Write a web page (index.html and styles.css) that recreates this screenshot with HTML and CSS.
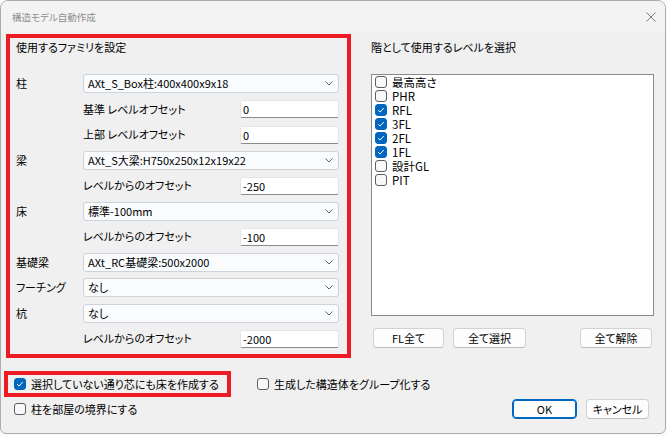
FILE: index.html
```html
<!DOCTYPE html>
<html lang="ja">
<head>
<meta charset="utf-8">
<title>構造モデル自動作成</title>
<link rel="stylesheet" href="styles.css">
</head>
<body>
<div class="window">
  <div class="titlebar">
    <span class="title">構造モデル自動作成</span>
    <svg class="close" width="10" height="10" viewBox="0 0 10 10"><path d="M0.5 0.5L9.5 9.5M9.5 0.5L0.5 9.5" stroke="#7a7a7a" stroke-width="1" fill="none"/></svg>
  </div>
  <div class="main">
    <section class="families">
      <div class="heading">使用するファミリを設定</div>
      <div class="fields">
        <span class="label">柱</span>
        <div class="select"><span>AXt_S_Box柱:400x400x9x18</span><svg width="8" height="5" viewBox="0 0 8 5"><path d="M0.5 0.5L4 4L7.5 0.5" fill="none" stroke="#606060" stroke-width="1"/></svg></div>
        <span class="sublabel">基準 レベルオフセット</span>
        <div class="input">0</div>
        <span class="sublabel">上部 レベルオフセット</span>
        <div class="input">0</div>

        <span class="label">梁</span>
        <div class="select"><span>AXt_S大梁:H750x250x12x19x22</span><svg width="8" height="5" viewBox="0 0 8 5"><path d="M0.5 0.5L4 4L7.5 0.5" fill="none" stroke="#606060" stroke-width="1"/></svg></div>
        <span class="sublabel">レベルからのオフセット</span>
        <div class="input">-250</div>

        <span class="label">床</span>
        <div class="select"><span>標準-100mm</span><svg width="8" height="5" viewBox="0 0 8 5"><path d="M0.5 0.5L4 4L7.5 0.5" fill="none" stroke="#606060" stroke-width="1"/></svg></div>
        <span class="sublabel">レベルからのオフセット</span>
        <div class="input">-100</div>

        <span class="label">基礎梁</span>
        <div class="select"><span>AXt_RC基礎梁:500x2000</span><svg width="8" height="5" viewBox="0 0 8 5"><path d="M0.5 0.5L4 4L7.5 0.5" fill="none" stroke="#606060" stroke-width="1"/></svg></div>

        <span class="label">フーチング</span>
        <div class="select"><span>なし</span><svg width="8" height="5" viewBox="0 0 8 5"><path d="M0.5 0.5L4 4L7.5 0.5" fill="none" stroke="#606060" stroke-width="1"/></svg></div>

        <span class="label">杭</span>
        <div class="select"><span>なし</span><svg width="8" height="5" viewBox="0 0 8 5"><path d="M0.5 0.5L4 4L7.5 0.5" fill="none" stroke="#606060" stroke-width="1"/></svg></div>
        <span class="sublabel">レベルからのオフセット</span>
        <div class="input">-2000</div>
      </div>
    </section>

    <section class="levels">
      <div class="heading">階として使用するレベルを選択</div>
      <div class="listbox">
        <div class="item"><span class="cb"></span><span class="itext">最高高さ</span></div>
        <div class="item"><span class="cb"></span><span class="itext">PHR</span></div>
        <div class="item"><span class="cb checked"><svg width="10" height="10" viewBox="0 0 10 10"><path d="M2.2 5.2L4.1 7L7.8 3" fill="none" stroke="#fff" stroke-width="1"/></svg></span><span class="itext">RFL</span></div>
        <div class="item"><span class="cb checked"><svg width="10" height="10" viewBox="0 0 10 10"><path d="M2.2 5.2L4.1 7L7.8 3" fill="none" stroke="#fff" stroke-width="1"/></svg></span><span class="itext">3FL</span></div>
        <div class="item"><span class="cb checked"><svg width="10" height="10" viewBox="0 0 10 10"><path d="M2.2 5.2L4.1 7L7.8 3" fill="none" stroke="#fff" stroke-width="1"/></svg></span><span class="itext">2FL</span></div>
        <div class="item"><span class="cb checked"><svg width="10" height="10" viewBox="0 0 10 10"><path d="M2.2 5.2L4.1 7L7.8 3" fill="none" stroke="#fff" stroke-width="1"/></svg></span><span class="itext">1FL</span></div>
        <div class="item"><span class="cb"></span><span class="itext">設計GL</span></div>
        <div class="item"><span class="cb"></span><span class="itext">PIT</span></div>
      </div>
      <div class="list-buttons">
        <button class="btn w71">FL全て</button>
        <button class="btn w73">全て選択</button>
        <span class="spacer"></span>
        <button class="btn w72">全て解除</button>
      </div>
    </section>
  </div>

  <div class="options">
    <div class="opt-row">
      <label class="check highlight"><span class="cb checked"><svg width="10" height="10" viewBox="0 0 10 10"><path d="M2.2 5.2L4.1 7L7.8 3" fill="none" stroke="#fff" stroke-width="1"/></svg></span>選択していない通り芯にも床を作成する</label>
      <label class="check group"><span class="cb"></span>生成した構造体をグループ化する</label>
    </div>
    <div class="opt-row row2">
      <label class="check"><span class="cb"></span>柱を部屋の境界にする</label>
      <div class="dialog-buttons">
        <button class="btn ok">OK</button>
        <button class="btn cancel">キャンセル</button>
      </div>
    </div>
  </div>
</div>
</body>
</html>
```

FILE: styles.css
```css
* { box-sizing: border-box; }
html, body { margin: 0; padding: 0; }
body {
  width: 667px;
  height: 436px;
  overflow: hidden;
  background: #fafafa;
  font-family: "Noto Sans CJK JP", "Noto Sans", sans-serif;
  font-size: 11px;
  color: #000;
  font-feature-settings: "palt";
}
.window {
  width: 666px;
  height: 434px;
  border: 1px solid #acacac;
  border-radius: 8px 8px 6px 6px;
  background: #f0f0f0;
  display: flex;
  flex-direction: column;
  overflow: hidden;
}
.titlebar {
  height: 31px;
  flex: none;
  background: #f3f3f3;
  display: flex;
  align-items: center;
  justify-content: space-between;
  padding: 0 9px 0 11px;
}
.title { font-size: 9.5px; color: #8e8e8e; }
.close { display: block; }

.main { display: flex; padding: 2px 11px 0 5px; }
.families {
  width: 345px;
  height: 324px;
  flex: none;
  border: 4px solid #ed1c24;
  padding: 1px 8px 0 6px;
}
.heading { height: 16px; line-height: 16px; }
.fields {
  margin-top: 19px;
  display: grid;
  grid-template-columns: 67px 157px 99px;
  grid-auto-rows: 19px;
  row-gap: 6.5px;
  align-items: center;
}
.label { grid-column: 1; line-height: 19px; }
.sublabel { grid-column: 2; line-height: 19px; }
.select {
  grid-column: 2 / span 2;
  height: 19px;
  display: flex;
  align-items: center;
  justify-content: space-between;
  padding: 0 5px 0 4px;
  background: #f9fbfd;
  border: 1px solid #ccd3db;
  border-radius: 3px;
  line-height: 17px;
}
.select svg { display: block; }
.input {
  grid-column: 3;
  height: 18px;
  background: #fff;
  border: 1px solid #e4e4e4;
  border-bottom-color: #8c8c8c;
  border-radius: 2px;
  padding: 0 2px;
  line-height: 16px;
}

.levels {
  width: 283px;
  flex: none;
  margin-left: 20px;
  padding-top: 5px;
  display: flex;
  flex-direction: column;
}
.listbox {
  margin-top: 19px;
  height: 242px;
  background: #fff;
  border: 1px solid #8a8a8a;
  padding: 0 0 0 3px;
}
.item { height: 14px; display: flex; align-items: center; gap: 5px; font-size: 11.5px; }
.itext { display: block; height: 14px; line-height: 14px; overflow: hidden; }
.cb {
  width: 12px;
  height: 12px;
  flex: none;
  border: 1px solid #5e5e5e;
  border-radius: 3px;
  background: #f8f8f8;
  display: flex;
  align-items: center;
  justify-content: center;
}
.cb.checked { background: #0067c0; border-color: #0067c0; }
.cb svg { display: block; }

.list-buttons { margin-top: 12px; display: flex; gap: 9px; padding: 0 2px; }
.spacer { flex: 1; }
.btn {
  height: 20px;
  font: inherit;
  font-size: 11px;
  color: #000;
  background: #fdfdfd;
  border: 1px solid #d2d2d2;
  border-bottom-color: #bdbdbd;
  border-radius: 4px;
  padding: 0;
  line-height: 18px;
}
.w71 { width: 71px; }
.w72 { width: 72px; }
.w73 { width: 73px; }

.options { padding: 13px 16px 0 13px; display: flex; flex-direction: column; }
.opt-row { display: flex; align-items: center; }
.check { display: flex; align-items: center; gap: 5px; line-height: 16px; }
.highlight {
  margin-left: -10px;
  width: 227px;
  height: 26px;
  border: 4px solid #ed1c24;
  padding-left: 6px;
}
.group { margin-left: 26px; }
.row2 { margin-top: 1px; height: 21px; justify-content: space-between; }
.dialog-buttons { display: flex; gap: 9px; }
.ok { width: 65px; border: 1px solid #0067c0; box-shadow: inset 0 0 0 1px #0067c0; }
.cancel { width: 63px; }
```
